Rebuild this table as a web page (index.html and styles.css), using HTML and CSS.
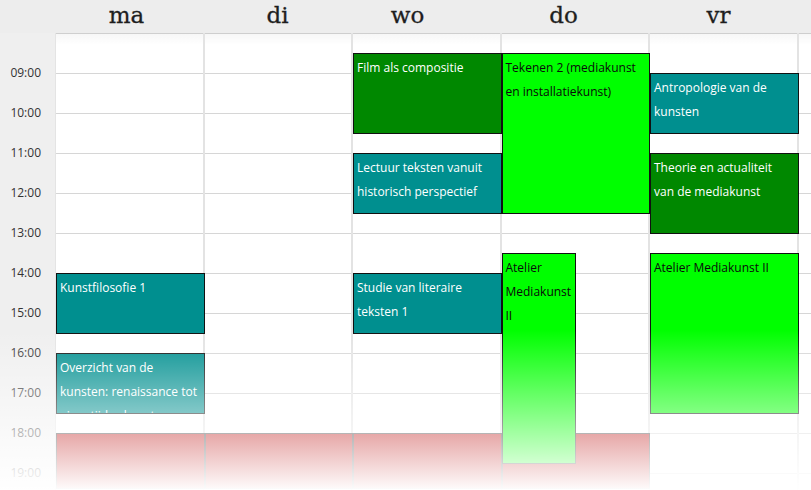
FILE: index.html
```html
<!DOCTYPE html>
<html lang="nl">
<head>
<meta charset="utf-8">
<title>Rooster</title>
<link rel="stylesheet" href="styles.css">
</head>
<body>
<div class="cal">
  <div class="head">
    <div class="head-gap"></div>
    <div class="day-name">ma</div>
    <div class="day-name">di</div>
    <div class="day-name">wo</div>
    <div class="day-name">do</div>
    <div class="day-name">vr</div>
    <div class="day-name"></div>
  </div>
  <div class="body">
    <div class="times">
      <div class="time">09:00</div>
      <div class="time">10:00</div>
      <div class="time">11:00</div>
      <div class="time">12:00</div>
      <div class="time">13:00</div>
      <div class="time">14:00</div>
      <div class="time">15:00</div>
      <div class="time">16:00</div>
      <div class="time">17:00</div>
      <div class="time">18:00</div>
      <div class="time">19:00</div>
    </div>
    <div class="col">
      <div class="ev teal" style="top:240px;height:61px">Kunstfilosofie 1</div>
      <div class="ev teal" style="top:320px;height:61px">Overzicht van de kunsten: renaissance tot eigentijdse kunst</div>
      <div class="ev block" style="top:400px;height:56px"></div>
    </div>
    <div class="col">
      <div class="ev block" style="top:400px;height:56px"></div>
    </div>
    <div class="col">
      <div class="ev dgreen" style="top:20px;height:81px">Film als compositie</div>
      <div class="ev teal" style="top:120px;height:61px">Lectuur teksten vanuit historisch perspectief</div>
      <div class="ev teal" style="top:240px;height:61px">Studie van literaire teksten 1</div>
      <div class="ev block" style="top:400px;height:56px"></div>
    </div>
    <div class="col">
      <div class="ev lgreen" style="top:20px;height:161px">Tekenen 2 (mediakunst en installatiekunst)</div>
      <div class="ev block" style="top:400px;height:56px"></div>
      <div class="ev lgreen half" style="top:220px;height:211px">Atelier Mediakunst II</div>
    </div>
    <div class="col">
      <div class="ev teal" style="top:40px;height:61px">Antropologie van de kunsten</div>
      <div class="ev dgreen" style="top:120px;height:81px">Theorie en actualiteit van de mediakunst</div>
      <div class="ev lgreen" style="top:220px;height:161px">Atelier Mediakunst II</div>
    </div>
    <div class="col last"></div>
  </div>
  <div class="fade"></div>
</div>
</body>
</html>
```

FILE: styles.css
```css
* { box-sizing: border-box; }
html, body { margin: 0; padding: 0; background: #fff; }
body { font-family: "Open Sans", "DejaVu Sans", sans-serif; }

.cal {
  position: relative;
  width: 811px;
  height: 490px;
  overflow: hidden;
}

.head {
  display: grid;
  grid-template-columns: 56px 141px 161px 99px 213px 97px 1fr;
  height: 33px;
  background: #ededed;
}
.day-name {
  font-family: "DejaVu Serif", serif;
  font-size: 23px;
  line-height: 31px;
  color: #1e1e1e;
  text-align: center;
  -webkit-text-stroke: 0.3px #1e1e1e;
}

.body {
  display: grid;
  grid-template-columns: 56px repeat(5, 148.5px) 1fr;
  height: 457px;
}

.times {
  background: #efefef;
  padding-top: 20px;
  border-right: 1px solid #e4e4e4;
}
.time {
  height: 40px;
  line-height: 40px;
  font-size: 12px;
  color: #333;
  text-align: right;
  padding-right: 14px;
}

.col {
  position: relative;
  border-right: 2px solid #e3e3e3;
  background:
    linear-gradient(to bottom, rgba(0,0,0,0.035), rgba(0,0,0,0) 12px),
    repeating-linear-gradient(to bottom, #d6d6d6 0 1px, transparent 1px 40px);
}
.col.last { border-right: none; }

.ev {
  position: absolute;
  left: 0;
  right: -2px;
  border: 1px solid #111;
  padding: 2px 5px 2px 3px;
  font-size: 12px;
  line-height: 24px;
  overflow: hidden;
  color: #fff;
}
.ev.half { right: auto; width: 74px; padding-right: 2px; }
.teal { background: #008f8f; }
.dgreen { background: #008800; }
.lgreen { background: #00ff00; color: #0a0a0a; }
.block { background: #bb0c0c; border-color: #333; }

.fade {
  position: absolute;
  left: 0;
  right: 0;
  top: 0;
  bottom: 0;
  pointer-events: none;
  background: linear-gradient(to bottom, rgba(255,255,255,0) 330px, rgba(255,255,255,1) 492px);
}
```
